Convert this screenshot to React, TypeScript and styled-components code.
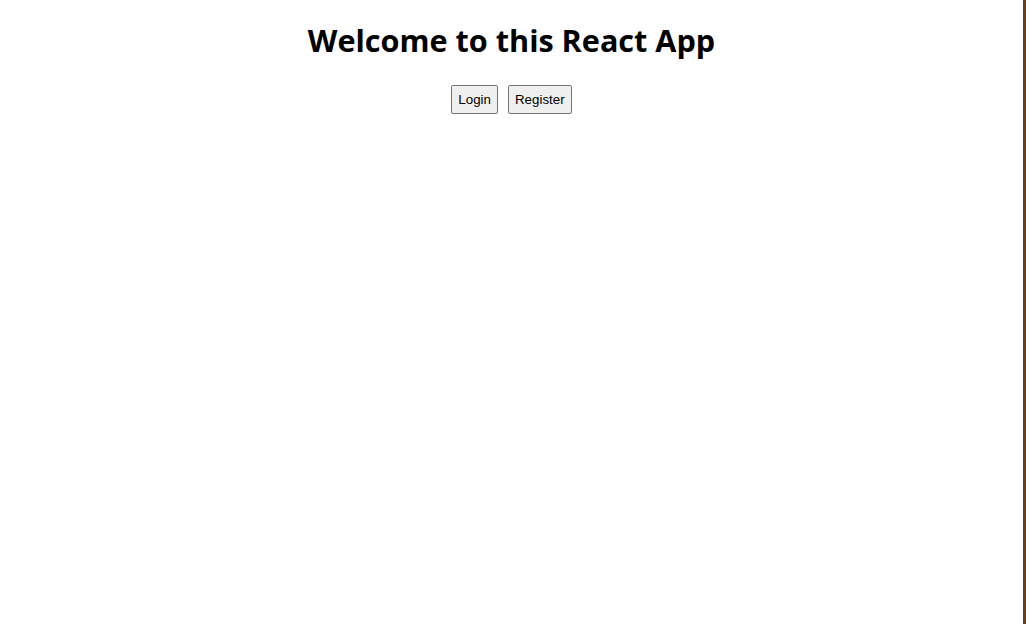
import React from "react";
import styled, { createGlobalStyle } from "styled-components";

const GlobalStyle = createGlobalStyle`
  html, body { margin: 0; padding: 0; background: #ffffff; }
  body { font-family: "Liberation Sans", Arial, sans-serif; }
`;

const Page = styled.div`
  display: flex;
  min-height: 100vh;
`;

const Main = styled.main`
  flex: 1;
  padding: 8px;
  display: flex;
  flex-direction: column;
  align-items: center;
`;

const Edge = styled.div`
  width: 3px;
  background: #683f1c;
`;

const Title = styled.h1`
  font-family: "Open Sans", "Noto Sans", sans-serif;
  font-weight: 700;
  font-size: 30.6px;
  line-height: 1.3;
  margin: 13px 0 0;
  color: #000;
`;

const Actions = styled.div`
  display: flex;
  gap: 10px;
  margin-top: 24px;
`;

const Button = styled.button`
  font-family: "Liberation Sans", Arial, sans-serif;
  font-size: 13.33px;
  height: 29px;
  padding: 0 6px;
  background: #efefef;
  border: 1px solid #767676;
  border-radius: 2px;
  color: #000;
`;

export default function App() {
  return (
    <>
      <GlobalStyle />
      <Page>
        <Main>
          <Title>Welcome to this React App</Title>
          <Actions>
            <Button>Login</Button>
            <Button>Register</Button>
          </Actions>
        </Main>
        <Edge />
      </Page>
    </>
  );
}
